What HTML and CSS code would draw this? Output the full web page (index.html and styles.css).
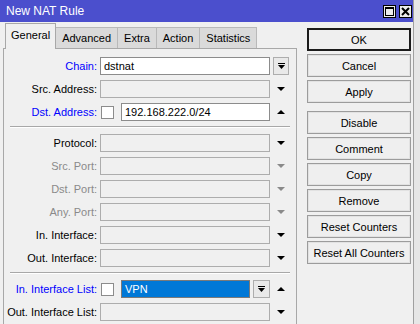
FILE: index.html
```html
<!DOCTYPE html>
<html>
<head>
    <title>New NAT Rule</title>
    <link rel="stylesheet" href="styles.css">
</head>
<body>
<div class="window">
    <div class="titlebar">
        <span class="title">New NAT Rule</span>
        <span class="tbtn">
            <svg width="9" height="9" viewBox="0 0 9 9"><rect x="0.5" y="0.5" width="8" height="8" fill="none" stroke="#000"/><rect x="0" y="0" width="9" height="2" fill="#000"/></svg>
        </span>
        <span class="tbtn">
            <svg width="9" height="9" viewBox="0 0 9 9"><path d="M1 1L8 8M8 1L1 8" stroke="#000" stroke-width="2"/></svg>
        </span>
    </div>

    <div class="main">
        <div class="left">
            <div class="tabs">
                <div class="tab active">General</div>
                <div class="tab">Advanced</div>
                <div class="tab">Extra</div>
                <div class="tab">Action</div>
                <div class="tab">Statistics</div>
            </div>

            <div class="panel">
                <div class="row">
                    <label class="lbl blue">Chain:</label>
                    <div class="ctl"><div class="field white">dstnat</div></div>
                    <span class="act"><span class="ddbtn"><svg width="7" height="7" viewBox="0 0 7 7"><rect width="7" height="1"/><path d="M0 2h7l-3.5 4z"/></svg></span></span>
                </div>
                <div class="row">
                    <label class="lbl">Src. Address:</label>
                    <div class="ctl"><div class="field"></div></div>
                    <span class="act"><svg width="8" height="4" viewBox="0 0 8 4"><path d="M0 0h8l-4 4z"/></svg></span>
                </div>
                <div class="row">
                    <label class="lbl blue">Dst. Address:</label>
                    <div class="ctl"><span class="check"></span><div class="field white">192.168.222.0/24</div></div>
                    <span class="act"><svg width="8" height="4" viewBox="0 0 8 4"><path d="M0 4h8l-4-4z"/></svg></span>
                </div>

                <div class="sep"></div>

                <div class="row">
                    <label class="lbl">Protocol:</label>
                    <div class="ctl"><div class="field"></div></div>
                    <span class="act"><svg width="8" height="4" viewBox="0 0 8 4"><path d="M0 0h8l-4 4z"/></svg></span>
                </div>
                <div class="row">
                    <label class="lbl gray">Src. Port:</label>
                    <div class="ctl"><div class="field"></div></div>
                    <span class="act dim"><svg width="8" height="4" viewBox="0 0 8 4"><path d="M0 0h8l-4 4z"/></svg></span>
                </div>
                <div class="row">
                    <label class="lbl gray">Dst. Port:</label>
                    <div class="ctl"><div class="field"></div></div>
                    <span class="act dim"><svg width="8" height="4" viewBox="0 0 8 4"><path d="M0 0h8l-4 4z"/></svg></span>
                </div>
                <div class="row">
                    <label class="lbl gray">Any. Port:</label>
                    <div class="ctl"><div class="field"></div></div>
                    <span class="act dim"><svg width="8" height="4" viewBox="0 0 8 4"><path d="M0 0h8l-4 4z"/></svg></span>
                </div>
                <div class="row">
                    <label class="lbl">In. Interface:</label>
                    <div class="ctl"><div class="field"></div></div>
                    <span class="act"><svg width="8" height="4" viewBox="0 0 8 4"><path d="M0 0h8l-4 4z"/></svg></span>
                </div>
                <div class="row">
                    <label class="lbl">Out. Interface:</label>
                    <div class="ctl"><div class="field"></div></div>
                    <span class="act"><svg width="8" height="4" viewBox="0 0 8 4"><path d="M0 0h8l-4 4z"/></svg></span>
                </div>

                <div class="sep"></div>

                <div class="row">
                    <label class="lbl blue">In. Interface List:</label>
                    <div class="ctl">
                        <span class="check"></span>
                        <div class="field selected">VPN</div>
                        <span class="ddbtn inline"><svg width="7" height="7" viewBox="0 0 7 7"><rect width="7" height="1"/><path d="M0 2h7l-3.5 4z"/></svg></span>
                    </div>
                    <span class="act"><svg width="8" height="4" viewBox="0 0 8 4"><path d="M0 4h8l-4-4z"/></svg></span>
                </div>
                <div class="row">
                    <label class="lbl">Out. Interface List:</label>
                    <div class="ctl"><div class="field"></div></div>
                    <span class="act"><svg width="8" height="4" viewBox="0 0 8 4"><path d="M0 0h8l-4 4z"/></svg></span>
                </div>
            </div>
        </div>

        <div class="side">
            <button class="btn default">OK</button>
            <button class="btn">Cancel</button>
            <button class="btn">Apply</button>
            <button class="btn gap">Disable</button>
            <button class="btn">Comment</button>
            <button class="btn">Copy</button>
            <button class="btn">Remove</button>
            <button class="btn">Reset Counters</button>
            <button class="btn">Reset All Counters</button>
        </div>
    </div>
</div>
</body>
</html>
```

FILE: styles.css
```css
body {
    margin: 0;
    background: #e6e6e6;
    font-family: "Liberation Sans", Arial, sans-serif;
    font-size: 11px;
    color: #000;
    overflow: hidden;
}
.window {
    width: 413px;
    height: 324px;
    background: #f0f0f0;
    border-right: 1px solid #a0a0a0;
    overflow: hidden;
}
.titlebar {
    height: 22px;
    background: #4b4fcd;
    display: flex;
    align-items: center;
    padding: 0 1px 0 6px;
    gap: 3px;
}
.title {
    color: #fff;
    font-size: 12px;
    flex: 1;
}
.tbtn {
    width: 11px;
    height: 11px;
    background: #ececec;
    border: 1px solid #000;
    display: flex;
    align-items: center;
    justify-content: center;
}
.main {
    display: flex;
}
.left {
    width: 294px;
    margin-left: 3px;
}
.tabs {
    display: flex;
    align-items: flex-end;
    height: 26px;
    padding-left: 2px;
}
.tab {
    height: 20px;
    line-height: 20px;
    padding: 0 6px;
    background: #dadada;
    border: 1px solid #b9b9b9;
    border-bottom: none;
    margin-left: -1px;
}
.tab.active {
    height: 25px;
    line-height: 23px;
    padding: 0 5px;
    background: #f0f0f0;
    border-color: #a8a8a8;
    margin-bottom: -1px;
    margin-left: 0;
    position: relative;
    z-index: 1;
}
.panel {
    height: 300px;
    border: 1px solid #a8a8a8;
    padding-top: 8px;
}
.row {
    display: flex;
    align-items: center;
    height: 18px;
    margin-bottom: 5px;
}
.lbl {
    width: 93px;
    text-align: right;
    white-space: nowrap;
}
.lbl.blue {
    color: #0000ff;
}
.lbl.gray {
    color: #8a8a8a;
}
.ctl {
    display: flex;
    align-items: center;
    width: 170px;
    margin-left: 3px;
    height: 18px;
}
.field {
    flex: 1;
    height: 16px;
    line-height: 16px;
    border: 1px solid #adadad;
    padding: 0 3px;
    white-space: nowrap;
    overflow: hidden;
}
.field.white {
    background: #fff;
    border-color: #8c8c8c;
}
.field.selected {
    background: #0078d7;
    color: #fff;
    border-color: #7a7a7a;
}
.check {
    width: 11px;
    height: 11px;
    background: #fff;
    border: 1px solid #8c8c8c;
    margin: 0 7px 0 1px;
}
.act {
    width: 22px;
    display: flex;
    justify-content: center;
    align-items: center;
}
.act svg {
    fill: #000;
}
.act.dim svg {
    fill: #8a8a8a;
}
.ddbtn {
    width: 14px;
    height: 16px;
    border: 1px solid #adadad;
    background: #e9e9e9;
    display: flex;
    align-items: center;
    justify-content: center;
}
.ddbtn.inline {
    margin-left: 3px;
    width: 15px;
}
.sep {
    height: 0;
    border-top: 1px solid #a8a8a8;
    border-bottom: 1px solid #fff;
    margin: 1px 6px 6px 6px;
}
.side {
    width: 104px;
    margin-left: 10px;
    padding-top: 6px;
    display: flex;
    flex-direction: column;
    gap: 3px;
}
.btn {
    height: 23px;
    background: #efefef;
    border: 1px solid #9c9c9c;
    box-shadow: inset 0 0 0 1px #e2e2e2;
    font-family: "Liberation Sans", Arial, sans-serif;
    font-size: 11px;
    color: #000;
    padding: 0;
}
.btn.default {
    border: 2px solid #1b1b1b;
    box-shadow: none;
}
.btn.gap {
    margin-top: 5px;
}
```
